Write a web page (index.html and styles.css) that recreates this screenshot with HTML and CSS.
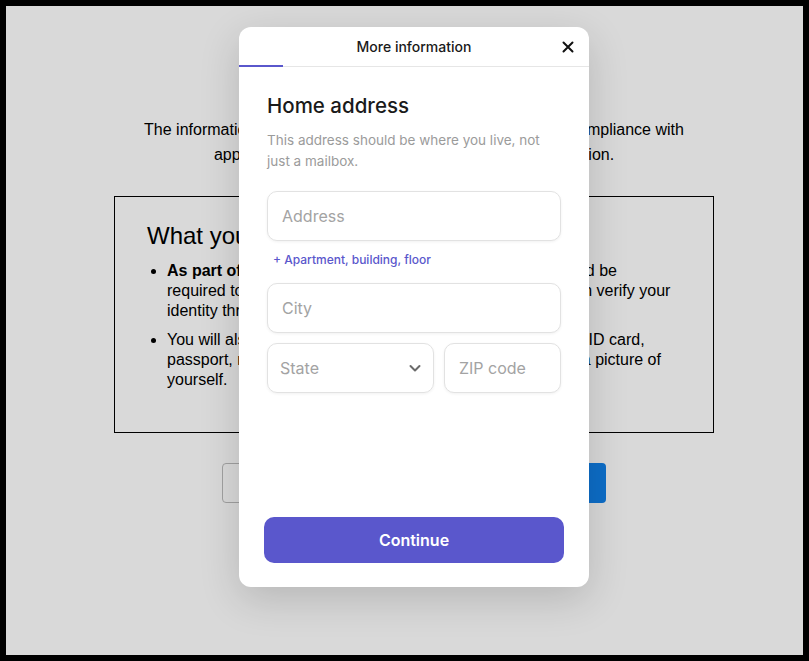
FILE: index.html
```html
<!DOCTYPE html>
<html lang="en">
<head>
    <meta charset="UTF-8">
    <meta name="viewport" content="width=device-width, initial-scale=1.0">
    <title>Verify your identity</title>
    <link rel="stylesheet" href="styles.css">
</head>
<body>
    <div class="frame">
        <main class="page">
            <h1>Verify your identity</h1>
            <p class="intro">The information you provide is used to verify your identity in compliance with applicable anti-money laundering and privacy regulation.</p>
            <section class="needs">
                <h2>What you'll need</h2>
                <ul>
                    <li><strong>As part of the verification,</strong> you should be asked to or could be<br>required to take a short video or photo of yourself so we can verify your<br>identity through our partner.</li>
                    <li>You will also need a valid, official government-issued photo ID card,<br>passport, residence permit, or a valid driver's license, plus a picture of<br>yourself.</li>
                </ul>
            </section>
            <div class="actions">
                <button class="btn btn-outline">Back</button>
                <button class="btn btn-primary">Get started</button>
            </div>
        </main>

        <div class="overlay"></div>

        <div class="modal">
            <div class="modal-header">
                <span></span>
                <span class="modal-title">More information</span>
                <button class="close" aria-label="Close">
                    <svg width="12" height="12" viewBox="0 0 12 12"><path d="M1.5 1.5l9 9M10.5 1.5l-9 9" stroke="#111" stroke-width="2" stroke-linecap="round"/></svg>
                </button>
                <div class="progress"></div>
            </div>
            <div class="modal-body">
                <h2 class="modal-heading">Home address</h2>
                <p class="subtitle">This address should be where you live, not just a mailbox.</p>
                <input class="field" type="text" placeholder="Address">
                <a class="add-line" href="#">+ Apartment, building, floor</a>
                <input class="field" type="text" placeholder="City">
                <div class="field-row">
                    <div class="field select">
                        <span>State</span>
                        <svg width="14" height="14" viewBox="0 0 14 14"><path d="M2.5 5l4.5 4.5L11.5 5" fill="none" stroke="#6b6b6b" stroke-width="2" stroke-linecap="round" stroke-linejoin="round"/></svg>
                    </div>
                    <input class="field" type="text" placeholder="ZIP code">
                </div>
            </div>
            <div class="modal-footer">
                <button class="continue">Continue</button>
            </div>
        </div>
    </div>
</body>
</html>
```

FILE: styles.css
```css
html, body {
    margin: 0;
    height: 100%;
}
body {
    font-family: "Liberation Sans", Arial, sans-serif;
    color: #000;
}
.frame {
    position: relative;
    height: 661px;
    box-sizing: border-box;
    border: 6px solid #000;
    padding-left: 19px;
    background: #fff;
    overflow: hidden;
}
.page {
    width: 600px;
    margin: 0 auto;
    padding-top: 61px;
}
.page h1 {
    margin: 0 0 16px;
    font-size: 28px;
    line-height: 34px;
    text-align: center;
}
.intro {
    margin: 0 0 29px;
    font-size: 16px;
    line-height: 25px;
    text-align: center;
}
.needs {
    border: 1px solid #000;
    padding: 24px 32px 26px;
}
.needs h2 {
    margin: 0;
    font-size: 24px;
    line-height: 29px;
    font-weight: normal;
}
.needs ul {
    margin: 11px 0 16px;
    padding-left: 20px;
}
.needs li {
    font-size: 16px;
    line-height: 20px;
    margin-bottom: 9px;
}
.needs li:last-child {
    margin-bottom: 0;
}
.actions {
    display: flex;
    justify-content: center;
    gap: 18px;
    margin-top: 30px;
}
.btn {
    width: 183px;
    height: 40px;
    border-radius: 4px;
    font: inherit;
    font-size: 16px;
}
.btn-outline {
    background: #fff;
    border: 1px solid #bdbdbd;
}
.btn-primary {
    background: #1080ea;
    border: 0;
    color: #fff;
}
.overlay {
    position: absolute;
    inset: 0;
    background: rgba(0, 0, 0, 0.15);
}

/* modal */
.modal {
    position: absolute;
    top: 21px;
    left: 233px;
    width: 350px;
    height: 560px;
    background: #fff;
    border-radius: 12px;
    box-shadow: 0 12px 40px rgba(0, 0, 0, 0.16);
    display: flex;
    flex-direction: column;
    overflow: hidden;
    font-family: Inter, "Noto Sans", sans-serif;
    color: #1a1a1a;
}
.modal-header {
    position: relative;
    height: 39px;
    border-bottom: 1px solid #e6e6e6;
    display: grid;
    grid-template-columns: 1fr auto 1fr;
    align-items: center;
}
.modal-title {
    font-size: 14px;
    font-weight: 500;
}
.close {
    justify-self: end;
    margin-right: 15px;
    padding: 0;
    border: 0;
    background: none;
    display: flex;
}
.progress {
    position: absolute;
    left: 0;
    bottom: -1px;
    width: 44px;
    height: 2px;
    background: #5a57cc;
}
.modal-body {
    padding: 27px 28px 0;
    display: flex;
    flex-direction: column;
}
.modal-heading {
    margin: 0 0 12px;
    font-size: 20.5px;
    line-height: 24px;
    font-weight: 500;
}
.subtitle {
    margin: 0 0 19px;
    font-size: 13.5px;
    line-height: 21px;
    color: #9b9b9b;
}
.field {
    height: 50px;
    box-sizing: border-box;
    border: 1px solid #e2e2e2;
    border-radius: 10px;
    box-shadow: 0 1px 3px rgba(0, 0, 0, 0.06);
    padding: 0 14px;
    font: inherit;
    font-size: 16px;
    color: #1a1a1a;
    width: 100%;
    outline: none;
}
.field::placeholder {
    color: #a3a3a3;
}
.add-line {
    align-self: flex-start;
    margin: 11px 0 15px 6px;
    font-size: 12px;
    line-height: 16px;
    font-weight: 500;
    color: #5a57cc;
    text-decoration: none;
}
.field-row {
    display: grid;
    grid-template-columns: 167px 1fr;
    gap: 10px;
    margin-top: 10px;
}
.select {
    display: flex;
    align-items: center;
    justify-content: space-between;
    padding: 0 11px 0 12px;
    color: #a3a3a3;
}
.modal-footer {
    margin-top: auto;
    padding: 0 25px 24px;
}
.continue {
    width: 100%;
    height: 46px;
    border: 0;
    border-radius: 10px;
    background: #5a57cc;
    color: #fff;
    font: inherit;
    font-size: 16px;
    font-weight: 600;
}
```
